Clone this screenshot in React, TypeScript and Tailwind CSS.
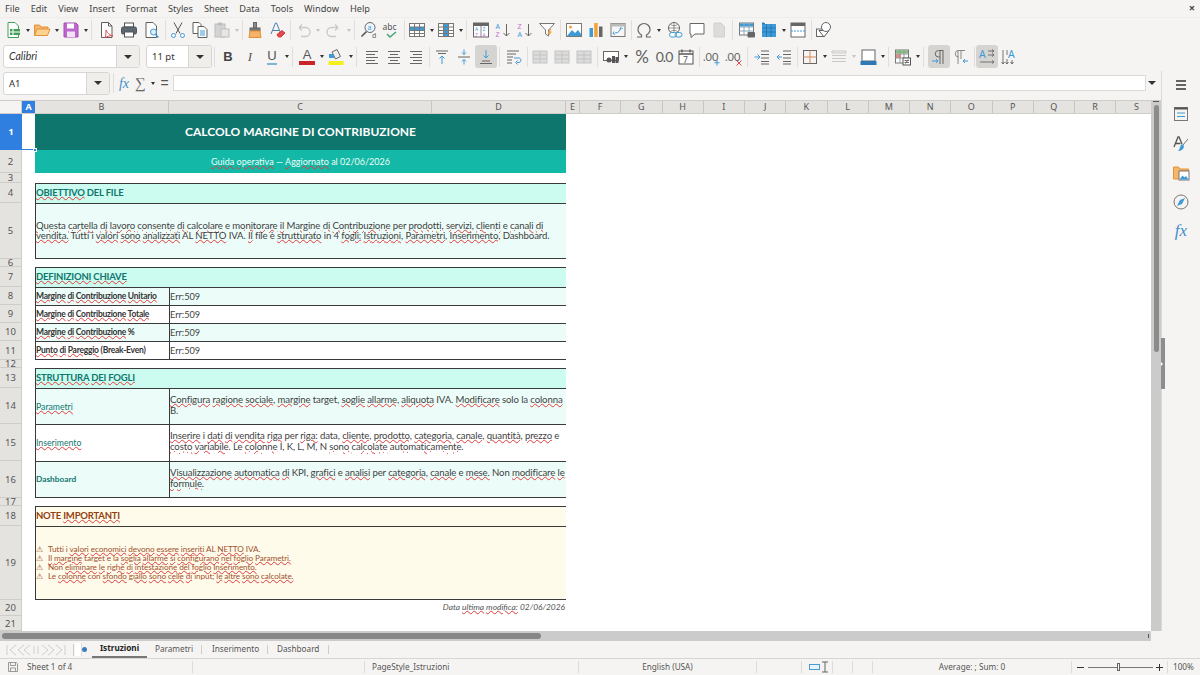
import { ReactNode } from "react";

const UI = "font-['Noto_Sans',sans-serif]";
const SHEET = "font-['Lato',sans-serif]";
const GRAY = "#5f5f5f";
const BLUE = "#3f9bd8";

// spell-check squiggle: words between ~ get the wavy red line
const T = ({ s }: { s: string }) => (
  <span>
    {s.split(/(~[^~]+~)/).map((part, i) =>
      part.startsWith("~") ? (
        <span key={i} className="underline decoration-wavy decoration-[#e23b3b] decoration-[0.5px] underline-offset-[0px]">
          {part.slice(1, -1)}
        </span>
      ) : (
        <span key={i}>{part}</span>
      )
    )}
  </span>
);

const Ico = ({ children }: { children: ReactNode }) => (
  <svg viewBox="0 0 18 18" className="w-[18px] h-[18px]" fill="none" stroke={GRAY} strokeWidth="1">
    {children}
  </svg>
);

const Btn = ({ children, active }: { children: ReactNode; active?: boolean }) => (
  <div className={active ? "w-[22px] h-[23px] shrink-0 flex items-center justify-center rounded-[3px] bg-[#d6d4d0]" : "w-[22px] h-[23px] shrink-0 flex items-center justify-center"}>
    {children}
  </div>
);

const Drop = ({ off }: { off?: boolean }) => (
  <div className="w-[7px] shrink-0 flex justify-center">
    <div className={off ? "border-x-[2.5px] border-t-[3px] border-x-transparent border-t-[#c4c4c4]" : "border-x-[2.5px] border-t-[3px] border-x-transparent border-t-[#333]"} />
  </div>
);

const Sep = () => (
  <div className="w-[4px] shrink-0 flex justify-center">
    <div className="w-px h-[20px] bg-[#e0dedb]" />
  </div>
);

const Combo = ({ w, text, italic }: { w: string; text: string; italic?: boolean }) => (
  <div className={`${w} h-[23px] shrink-0 flex rounded-[3px] border border-[#d8d6d3] bg-white overflow-hidden`}>
    <div className={italic ? "flex-1 pl-[5px] text-[10.5px] leading-[21px] italic text-[#333] font-['Lato',sans-serif]" : "flex-1 pl-[5px] text-[9.5px] leading-[21px] text-[#333]"}>{text}</div>
    <div className="w-[23px] bg-[#f0eeeb] border-l border-[#d8d6d3] flex items-center justify-center">
      <div className="border-x-[4px] border-t-[4px] border-x-transparent border-t-[#333]" />
    </div>
  </div>
);

const Grid = ({ row, col }: { row?: boolean; col?: boolean }) => (
  <Ico>
    <rect x="1.5" y="2.5" width="15" height="13" fill="#fff" stroke="#777" />
    {row && <rect x="2" y="6" width="14" height="3.5" fill={BLUE} stroke="none" />}
    {col && <rect x="6.5" y="3" width="5" height="12" fill={BLUE} stroke="none" />}
    <path d="M1.5 6h15M1.5 9.5h15M1.5 12.5h15M6.5 2.5v13M11.5 2.5v13" stroke="#777" />
  </Ico>
);

const Lines = ({ d }: { d: string }) => (
  <Ico>
    <path d={d} stroke="#666" />
  </Ico>
);

const Merge = () => (
  <Ico>
    <rect x="2" y="3" width="14" height="12" fill="#dcdcdc" stroke="#c4c4c4" />
    <path d="M2 7h14M2 11h14M9 3v12" stroke="#c4c4c4" />
  </Ico>
);

const Menu = () => (
  <div className="h-[17px] shrink-0 flex items-center pl-[5px] gap-[11px] text-[9.2px] text-[#444] relative">
    {["File", "Edit", "View", "Insert", "Format", "Styles", "Sheet", "Data", "Tools", "Window", "Help"].map((m) => (
      <span key={m}>{m}</span>
    ))}
    <span className="absolute right-[5px] top-0 text-[11px] font-bold text-[#444]">×</span>
  </div>
);

const ToolbarOne = () => (
  <div className="h-[26px] shrink-0 flex items-center pl-[2px] pb-[2px]">
    <Btn><Ico><path d="M4 1.5h7l3.5 3.5v11.5H4z" fill="#fff" stroke="#43a05a" /><rect x="6" y="8" width="10" height="6" fill="#43a05a" stroke="none" /><path d="M9 8v6M6 11h10" stroke="#fff" /></Ico></Btn>
    <Drop />
    <Btn><Ico><path d="M1.5 14.5V4h5l1.5 2h7v2.5" fill="#f6b567" stroke="#e0923a" /><path d="M1.5 14.5l2.5-6.5h13l-2.5 6.5z" fill="#fcd28f" stroke="#e0923a" /></Ico></Btn>
    <Drop />
    <Btn><Ico><path d="M2 2h12l2 2v12H2z" fill="#bd68cc" stroke="#a54fb6" /><rect x="5" y="2.5" width="7" height="5" fill="#fff" stroke="none" /><rect x="5" y="10.5" width="8" height="5.5" fill="#f2e2f5" stroke="none" /></Ico></Btn>
    <Drop />
    <Sep />
    <div className="w-[3px]" />
    <Btn><Ico><path d="M3.5 1.5h7l3.5 3.5v11.5H3.5z" fill="#fff" /><path d="M10.5 1.5v3.5h3.5" /><path d="M8 9c2 4 4 5 7 6-3-.5-6 0-8 2 1-3 1-5 1-8z" stroke="#e04f4f" /></Ico></Btn>
    <Btn><Ico><rect x="4.5" y="2" width="9" height="4" fill="#fff" stroke="#555" /><rect x="1.5" y="6" width="15" height="7" rx="1.5" fill="#5d6770" stroke="#4d565e" /><rect x="4.5" y="11" width="9" height="5" fill="#fff" stroke="#555" /></Ico></Btn>
    <div className="w-px" />
    <Btn><Ico><path d="M3 1.5h7l3.5 3.5v11.5H3z" fill="#fff" /><circle cx="10.5" cy="11" r="3" fill="#dff0fb" stroke={BLUE} /><path d="M12.5 13.5l3 3" stroke={BLUE} strokeWidth="1.5" /></Ico></Btn>
    <Sep />
    <Btn><Ico><path d="M5 1.5l6 11M13 1.5l-6 11" stroke="#555" /><circle cx="4.5" cy="14.5" r="2" stroke={BLUE} fill="#fff" /><circle cx="13.5" cy="14.5" r="2" stroke={BLUE} fill="#fff" /></Ico></Btn>
    <Btn><Ico><path d="M2 1.5h6l2 2v9H2z" fill="#fff" /><path d="M7 5.5h6l3 3v8H7z" fill="#fff" /><path d="M9 10h5M9 12h5M9 14h5" stroke={BLUE} /></Ico></Btn>
    <Btn><Ico><rect x="2" y="3" width="10" height="13" fill="#d4d4d4" stroke="#bdbdbd" /><rect x="8" y="8" width="8" height="8" fill="#e6e6e6" stroke="#bdbdbd" /><rect x="5" y="1.5" width="4" height="3" fill="#bdbdbd" stroke="none" /></Ico></Btn>
    <Drop off />
    <Sep />
    <Btn><Ico><rect x="7.5" y="1.5" width="3" height="5.5" fill="#8a8a8a" stroke="#666" /><rect x="4" y="7" width="10" height="3" fill="#777" stroke="#666" /><path d="M4 10h10l1 6.5H3z" fill="#f7b267" stroke="#e0923a" /></Ico></Btn>
    <Btn><Ico><path d="M3 13L7.5 2h1L13 13M5 9.5h6" stroke="#4a7fb0" /><path d="M9 13.5l5-4 3 2.500-4 4h-2.5z" fill="#e5484d" stroke="#d13a3f" /></Ico></Btn>
    <Sep />
    <Btn><Ico><path d="M5 6.5h6.5a4.5 4.5 0 0 1 0 9H7M5 6.5l3-3M5 6.5l3 3" stroke="#c9c9c9" strokeWidth="1.3" /></Ico></Btn>
    <Drop off />
    <div className="w-[2px]" />
    <Btn><Ico><path d="M13 6.5H6.5a4.5 4.5 0 0 0 0 9H11M13 6.5l-3-3M13 6.5l-3 3" stroke="#c9c9c9" strokeWidth="1.3" /></Ico></Btn>
    <Drop off />
    <Sep />
    <div className="w-[2px]" />
    <Btn><Ico><circle cx="10" cy="6.5" r="5" fill="#eef6fc" stroke="#666" /><path d="M6.5 10.5L1.5 15.5" stroke="#555" strokeWidth="1.6" /><text x="7.5" y="9" fontSize="7" fill={BLUE} stroke="none" fontFamily="Noto Sans">a</text><text x="12" y="17" fontSize="7" fill="#666" stroke="none" fontFamily="Noto Sans">d</text></Ico></Btn>
    <Btn><Ico><text x="0.5" y="9" fontSize="8.5" fill="#555" stroke="none" fontFamily="Noto Sans">abc</text><path d="M5 13l3 3 6-5" stroke="#3fa372" strokeWidth="1.4" /></Ico></Btn>
    <Sep />
    <Btn><Grid row /></Btn>
    <Drop />
    <Btn><Grid col /></Btn>
    <Drop />
    <Sep />
    <div className="w-[2px]" />
    <Btn><Ico><rect x="1.5" y="2" width="15" height="14" fill="#fff" stroke="#666" /><rect x="1.5" y="2" width="15" height="3" fill="#666" stroke="none" /><path d="M9 5v11" stroke="#888" /><text x="3" y="10" fontSize="5" fill={BLUE} stroke="none" fontFamily="Noto Sans">A</text><text x="10.500" y="10" fontSize="5" fill={BLUE} stroke="none" fontFamily="Noto Sans">Z</text><text x="3" y="15.5" fontSize="5" fill="#c86dd7" stroke="none" fontFamily="Noto Sans">Z</text><text x="10.500" y="15.5" fontSize="5" fill="#c86dd7" stroke="none" fontFamily="Noto Sans">A</text></Ico></Btn>
    <Btn><Ico><text x="1.5" y="8" fontSize="7" fill={BLUE} stroke="none" fontFamily="Noto Sans">A</text><text x="1.5" y="16" fontSize="7" fill="#c86dd7" stroke="none" fontFamily="Noto Sans">Z</text><path d="M12.5 3v12M9.5 12l3 3 3-3" stroke="#666" /></Ico></Btn>
    <Btn><Ico><text x="1.5" y="8" fontSize="7" fill="#c86dd7" stroke="none" fontFamily="Noto Sans">Z</text><text x="1.5" y="16" fontSize="7" fill={BLUE} stroke="none" fontFamily="Noto Sans">A</text><path d="M12.5 3v12M9.5 12l3 3 3-3" stroke="#666" /></Ico></Btn>
    <Btn><Ico><path d="M1.5 2.5h15l-6 6.5v6l-3-2v-4z" fill="#fff" stroke="#777" /><path d="M12 8l-2.5 4.5h2L10 16l4-5.5h-2l1.5-2.5z" fill="#f2a33a" stroke="none" /></Ico></Btn>
    <Sep />
    <div className="w-px" />
    <Btn><Ico><rect x="1.5" y="2.5" width="15" height="13" fill="#fff" stroke="#777" /><circle cx="5.5" cy="6" r="1.5" fill="#f2a33a" stroke="none" /><path d="M2 15l5-6 3 3 3-3 3 4v2z" fill={BLUE} stroke="none" /></Ico></Btn>
    <Btn><Ico><rect x="2.5" y="7" width="3.5" height="9" fill={BLUE} stroke="none" /><rect x="7.2" y="2" width="3.5" height="14" fill="#f2a33a" stroke="none" /><rect x="12" y="5.5" width="3.5" height="10.5" fill="#666" stroke="none" /></Ico></Btn>
    <Btn><Ico><rect x="2" y="2.5" width="14" height="13" fill="#f6f6f6" stroke="#777" /><rect x="2" y="2.5" width="14" height="3" fill="#bbb" stroke="none" /><path d="M6 12c3 0 5-2 6-5M10.5 8l1.700-1.500L13.5 8M5 10.500l-1 2 2 1" stroke={BLUE} /></Ico></Btn>
    <Sep />
    <Btn><Ico><path d="M2 16h4.500v-2C4 12.500 3 10.500 3 8.500a6 6 0 0 1 12 0c0 2-1 4-3.500 5.500v2H16" stroke="#666" strokeWidth="1.2" /></Ico></Btn>
    <Drop />
    <div className="w-[2px]" />
    <Btn><Ico><circle cx="8" cy="7" r="5.5" fill="#fff" stroke="#666" /><path d="M2.500 7h11M8 1.500v11M4.500 3.500c2 1.500 5 1.500 7 0M4.500 10.500c2-1.500 5-1.500 7 0" stroke="#666" strokeWidth=".7" /><rect x="3.5" y="11.5" width="7" height="4.5" rx="2.2" fill="#fff" stroke={BLUE} /><rect x="9" y="11.5" width="7" height="4.5" rx="2.2" stroke={BLUE} /></Ico></Btn>
    <Btn><Ico><path d="M2 2.500h14v10.500H7l-4 3.500V13H2z" fill="#fff" stroke="#666" /></Ico></Btn>
    <Btn><Ico><path d="M4 2h7l3.500 3.500V16H4z" fill="#dcdcdc" stroke="#cfcfcf" /></Ico></Btn>
    <Sep />
    <div className="w-[2px]" />
    <Btn><Ico><rect x="1.5" y="2" width="14" height="12" fill="#fff" stroke="#777" /><rect x="2" y="2.5" width="13" height="3" fill={BLUE} stroke="none" /><path d="M1.500 6h14M1.500 10h14M6 2v12M11 2v12" stroke="#8ab" /><rect x="9.5" y="11" width="7.5" height="5.5" rx="1" fill="#666" stroke="none" /></Ico></Btn>
    <Btn><Ico><rect x="2" y="3" width="14" height="13" fill={BLUE} stroke="none" /><path d="M2 7h14M2 11h14M6.500 3v13M11 3v13" stroke="#1d6fa8" strokeWidth=".7" /><path d="M3 1v3M2 2.500h3" stroke="#2b7fb8" /></Ico></Btn>
    <Drop />
    <Btn><Ico><rect x="2" y="2" width="14" height="14" fill="#fff" stroke="#666" /><rect x="2" y="2" width="14" height="3" fill="#666" stroke="none" /><path d="M2 10h14" stroke={BLUE} strokeDasharray="2 1" /></Ico></Btn>
    <Sep />
    <Btn><Ico><rect x="1.5" y="8" width="7" height="7.5" fill="#fff" stroke="#666" /><path d="M4 9.500l5 6.500 5-6.500z" fill="#fff" /><circle cx="11" cy="6" r="4.5" fill="#fff" stroke="#666" /></Ico></Btn>
  </div>
);

const ToolbarTwo = () => (
  <div className="h-[25px] shrink-0 flex items-center pl-[3px]">
    <Combo w="w-[137px]" text="Calibri" italic />
    <div className="w-[6px]" />
    <Combo w="w-[66px]" text="11 pt" />
    <Sep />
    <div className="w-px" />
    <Btn><span className="text-[13px] font-bold text-[#444] font-['Liberation_Sans',sans-serif]">B</span></Btn>
    <Btn><span className="text-[13px] italic text-[#555] font-['Liberation_Serif',serif]">I</span></Btn>
    <Btn><span className="text-[13px] text-[#555] border-b-2 border-[#7fb2d9] leading-[14px] font-['Liberation_Sans',sans-serif]">U</span></Btn>
    <Drop />
    <Sep />
    <div className="w-[2px]" />
    <Btn><div className="flex flex-col items-center"><span className="text-[13px] leading-[13px] text-[#555] font-['Liberation_Sans',sans-serif]">A</span><div className="w-[16px] h-[4px] bg-[#c9252b]" /></div></Btn>
    <Drop />
    <Btn><Ico><path d="M5 4l5-2.500 3.500 7-5 2.500z" fill="#eee" stroke="#666" /><rect x="2" y="6" width="5" height="4" fill={BLUE} stroke="none" /><rect x="1.5" y="13" width="15" height="4" fill="#f7ee1d" stroke="none" /></Ico></Btn>
    <Drop />
    <Sep />
    <div className="w-[3px]" />
    <Btn><Lines d="M3 3.500h12M3 6.500h9M3 9.500h12M3 12.500h9M3 15.500h12" /></Btn>
    <Btn><Lines d="M3 3.500h12M5 6.500h8M3 9.500h12M5 12.500h8M3 15.500h12" /></Btn>
    <Btn><Lines d="M3 3.500h12M6 6.500h9M3 9.500h12M6 12.500h9M3 15.500h12" /></Btn>
    <Sep />
    <Btn><Ico><path d="M3 3h12M5 5.500h8" stroke="#666" /><path d="M9 16V8M6.500 10.500L9 8l2.500 2.500" stroke={BLUE} /></Ico></Btn>
    <Btn><Ico><path d="M3 9h12" stroke="#666" /><path d="M9 1.500v5M7 4.500l2 2 2-2M9 16.500v-5M7 13.500l2-2 2 2" stroke={BLUE} /></Ico></Btn>
    <Btn active><Ico><path d="M3 15.500h12M5 13h8" stroke="#666" /><path d="M9 2v8M6.500 7.500L9 10l2.500-2.500" stroke={BLUE} /></Ico></Btn>
    <Sep />
    <div className="w-[2px]" />
    <Btn><Ico><path d="M2 3h12M2 6h9M2 9h6M2 12h5M2 15h5" stroke="#666" /><path d="M9 10h5c2.500 0 2.500 4.500 0 4.500h-2M12.500 12.500l-1.800 2 1.800 2" stroke={BLUE} /></Ico></Btn>
    <Sep />
    <Btn><Merge /></Btn>
    <Btn><Merge /></Btn>
    <Btn><Merge /></Btn>
    <Sep />
    <div className="w-px" />
    <Btn><Ico><rect x="1.5" y="3.5" width="15" height="9" fill="#fff" stroke="#666" /><circle cx="7" cy="12" r="2.5" fill="#555" stroke="none" /><rect x="10" y="8" width="3" height="7" fill="#555" stroke="none" /><rect x="13.5" y="9" width="3" height="6" fill="#555" stroke="none" /></Ico></Btn>
    <Drop />
    <div className="w-[2px]" />
    <Btn><span className="text-[17px] text-[#5f5f5f] font-['Lato',sans-serif]">%</span></Btn>
    <Btn><span className="text-[14px] text-[#5f5f5f] tracking-[-1px] font-['Lato',sans-serif]">0.0</span></Btn>
    <Btn><Ico><rect x="2" y="3" width="14" height="13" fill="#fff" stroke="#555" /><path d="M2 6h14M5 1.500v3M13 1.500v3" stroke="#555" strokeWidth="1.3" /><text x="6" y="14.5" fontSize="8.5" fill="#555" stroke="none" fontFamily="Noto Sans">7</text></Ico></Btn>
    <Sep />
    <Btn><Ico><text x="0" y="13" fontSize="11" fill="#666" stroke="none" fontFamily="Lato">.00</text><path d="M14 12v5.500M11.500 14.700h5" stroke={BLUE} /></Ico></Btn>
    <Btn><Ico><text x="0" y="13" fontSize="11" fill="#666" stroke="none" fontFamily="Lato">.00</text><path d="M11.500 12.500l5 5M16.500 12.500l-5 5" stroke="#e5484d" /></Ico></Btn>
    <Sep />
    <div className="w-[2px]" />
    <Btn><Ico><path d="M8 3h8M8 6.500h8M8 10h8M8 13.500h8M8 16h8" stroke="#666" /><path d="M1.500 9h5M4.500 6.500L7 9l-2.500 2.500" stroke={BLUE} /></Ico></Btn>
    <Btn><Ico><path d="M8 3h8M8 6.500h8M8 10h8M8 13.500h8M8 16h8" stroke="#666" /><path d="M7 9H2M4.500 6.500L2 9l2.500 2.500" stroke={BLUE} /></Ico></Btn>
    <Sep />
    <Btn><Ico><rect x="2.5" y="2.5" width="13" height="13" stroke="#666" /><path d="M9 2.500v13M2.500 9h13" stroke="#d38a5a" /></Ico></Btn>
    <Drop />
    <Btn><Ico><path d="M2 3h14v2H2zM2 7.500h14M2 10.500h14M2 13.500h14" stroke="#c8c8c8" /></Ico></Btn>
    <Drop off />
    <Btn><Ico><rect x="3" y="2" width="13" height="11" fill="#fff" stroke="#666" /><rect x="1.5" y="13" width="16" height="4" fill="#2f77b5" stroke="none" /></Ico></Btn>
    <Drop />
    <Sep />
    <div className="w-[2px]" />
    <Btn><Ico><rect x="1.5" y="2" width="13" height="13" fill="#fff" stroke="#777" /><rect x="2" y="2.5" width="12" height="3" fill="#7fbf7f" stroke="none" /><rect x="2" y="6" width="5" height="4" fill="#e58a8a" stroke="none" /><path d="M1.500 6h13M1.500 10h13M6 2v13M10 2v13" stroke="#999" /><rect x="9" y="10" width="7.5" height="7" fill="#fff" stroke="#555" /><path d="M10.500 12.500h4.500M10.500 14.500h4.500M14 11.500l-2.500 4" stroke="#555" strokeWidth=".8" /></Ico></Btn>
    <Drop />
    <Sep />
    <div className="w-[3px]" />
    <Btn active><Ico><path d="M13 2v14M10 2v14M13 2.500H8.500a3.200 3.200 0 0 0 0 6.500H10" stroke="#666" /><path d="M2 13h6M6 11l2 2-2 2" stroke={BLUE} /></Ico></Btn>
    <Btn><Ico><path d="M6 2v14M9 2v9M13 2.500H6.500a3.200 3.200 0 0 0 0 6.500" stroke="#888" /><path d="M16 13h-5M13 11l-2 2 2 2" stroke={BLUE} /></Ico></Btn>
    <Sep />
    <Btn active><Ico><text x="1" y="10" fontSize="10.5" fill={BLUE} stroke="none" fontFamily="Noto Sans">A</text><path d="M10 3h6M14 1.500L16 3l-2 1.500M10 7h6M14 5.500L16 7l-2 1.500M2 14h14M14 12.500l2 1.500-2 1.500" stroke="#666" strokeWidth=".9" /></Ico></Btn>
    <Btn><Ico><text x="8" y="10" fontSize="10.5" fill={BLUE} stroke="none" fontFamily="Noto Sans">A</text><path d="M3 2v14M1.500 14L3 16l1.500-2M7 2v5M5.500 14L7 16l1.500-2M7 11v5M12 12v4M10.500 14l1.500 2 1.500-2" stroke="#666" strokeWidth=".9" /></Ico></Btn>
  </div>
);

const FormulaBar = () => (
  <div className="h-[31px] shrink-0 flex items-center pl-[3px] pb-[3px]">
    <Combo w="w-[107px]" text="A1" />
    <div className="w-[7px] shrink-0 flex justify-center"><div className="w-px h-[20px] bg-[#e0dedb]" /></div>
    <div className="w-[14px] text-center italic text-[14px] text-[#3f8fc9] font-['Liberation_Serif',serif]">fx</div>
    <div className="w-[2px]" />
    <div className="w-[14px] text-center text-[15px] text-[#666] font-['Liberation_Serif',serif]">∑</div>
    <div className="w-[2px]" />
    <Drop />
    <div className="w-[17px] text-center text-[14px] text-[#555] font-['Liberation_Sans',sans-serif]">=</div>
    <div className="w-[973px] shrink-0 h-[16px] bg-white border border-[#dcdad7]" />
    <div className="w-[12px] flex justify-center">
      <div className="border-x-[4px] border-t-[4px] border-x-transparent border-t-[#333]" />
    </div>
  </div>
);

const ColumnHeaders = () => (
  <div className="h-[14px] shrink-0 flex bg-[#e5e3e0] border-y border-[#cfcdca] text-[9px] leading-[12px] text-[#555] overflow-hidden">
    <div className="w-[22px] shrink-0 bg-[#f5f4f2] border-r border-[#cfcdca]" />
    <div className="w-[13px] shrink-0 bg-[#2f7fe0] text-white text-center font-bold">A</div>
    <div className="w-[134px] shrink-0 text-center border-r border-[#c9c7c4]">B</div>
    <div className="w-[263px] shrink-0 text-center border-r border-[#c9c7c4]">C</div>
    <div className="w-[134px] shrink-0 text-center border-r border-[#c9c7c4]">D</div>
    <div className="w-[14px] shrink-0 text-center border-r border-[#c9c7c4]">E</div>
    {"FGHIJKLMNOPQRS".split("").map((c) => (
      <div key={c} className="w-[41.25px] shrink-0 text-center border-r border-[#c9c7c4]">{c}</div>
    ))}
  </div>
);

const Row = ({ n, h, active, children }: { n: number; h: string; active?: boolean; children?: ReactNode }) => (
  <div className={`flex shrink-0 ${h} bg-white`}>
    <div
      className={
        active
          ? `w-[22px] shrink-0 flex items-center justify-center text-[9.5px] font-bold text-white bg-[#2f7fe0] ${UI}`
          : `w-[22px] shrink-0 pt-[2px] flex items-center justify-center text-[9.5px] text-[#555] bg-[#e5e3e0] border-r border-b border-[#cfcdca] ${UI}`
      }
    >
      {n}
    </div>
    <div className="w-[13px] shrink-0 relative">
      {active && (
        <>
          <div className="absolute left-0 right-0 bottom-0 h-px bg-[#2f7fe0]" />
          <div className="absolute right-[-2px] bottom-[-2px] w-[4px] h-[4px] bg-[#2f7fe0] border border-white z-10" />
        </>
      )}
    </div>
    <div className="w-[531px] shrink-0 flex overflow-hidden">{children}</div>
  </div>
);

const Section = ({ n, text }: { n: number; text: string }) => (
  <Row n={n} h="h-[20px]">
    <div className="w-full border-l border-t border-[#3a3a3a] bg-[#ccfbef] text-[9.5px] tracking-[-0.2px] font-bold leading-[18px] text-[#0f766e]">
      <T s={text} />
    </div>
  </Row>
);

const KeyRow = ({ n, label, tint, last }: { n: number; label: string; tint?: boolean; last?: boolean }) => (
  <Row n={n} h={last ? "h-[19px]" : "h-[18px]"}>
    <div className={`flex w-full border-l border-t border-[#3a3a3a] ${last ? "border-b" : ""} ${tint ? "bg-[#ecfdf9]" : "bg-white"} leading-[17px]`}>
      <div className="w-[134px] shrink-0 text-[8.5px] tracking-[-0.25px] font-bold text-[#333] border-r border-[#3a3a3a] whitespace-nowrap"><T s={label} /></div>
      <div className="text-[#444] text-[9.2px]">Err:509</div>
    </div>
  </Row>
);

const SheetRow = ({ n, h, name, bold, tint, last, l1, l2 }: { n: number; h: string; name: string; bold?: boolean; tint?: boolean; last?: boolean; l1: string; l2: string }) => (
  <Row n={n} h={h}>
    <div className={`flex w-full border-l border-t border-[#3a3a3a] ${last ? "border-b" : ""} ${tint ? "bg-[#ecfdf9]" : "bg-white"}`}>
      <div className={`w-[134px] shrink-0 flex items-center border-r border-[#3a3a3a] text-[#0f766e] ${bold ? "font-bold text-[8.3px]" : "text-[8.7px]"}`}>
        <T s={name} />
      </div>
      <div className="pt-[6px] text-[9.6px] tracking-[-0.12px] leading-[10.5px] text-[#3f3f3f] whitespace-nowrap">
        <div><T s={l1} /></div>
        <div><T s={l2} /></div>
      </div>
    </div>
  </Row>
);

const Note = ({ s }: { s: string }) => (
  <div className="flex">
    <span className="w-[12px] shrink-0">⚠</span>
    <T s={s} />
  </div>
);

const Sheet = () => (
  <div className={`relative flex-1 flex flex-col overflow-hidden ${SHEET}`}>
    <div className={UI}><ColumnHeaders /></div>
    <Row n={1} h="h-[36px]" active>
      <div className="w-full bg-[#0f766e] flex items-center justify-center text-[12px] font-bold text-white">
        <T s="CALCOLO MARGINE DI CONTRIBUZIONE" />
      </div>
    </Row>
    <Row n={2} h="h-[23px]">
      <div className="w-full bg-[#14b8a6] flex items-center justify-center text-[9px] text-[#ecfdf9]">
        <T s="~Guida~ ~operativa~ — ~Aggiornato~ al 02/06/2026" />
      </div>
    </Row>
    <Row n={3} h="h-[10px]" />
    <Section n={4} text="~OBIETTIVO~ DEL FILE" />
    <Row n={5} h="h-[56px]">
      <div className="w-full border-l border-y border-[#3a3a3a] bg-[#ecfdf9] flex flex-col justify-center text-[9.6px] tracking-[-0.12px] leading-[10.5px] text-[#3f3f3f] whitespace-nowrap">
        <div><T s="~Questa~ ~cartella~ ~di~ ~lavoro~ ~consente~ ~di~ ~calcolare~ e ~monitorare~ ~il~ ~Margine~ ~di~ ~Contribuzione~ per ~prodotti,~ ~servizi,~ ~clienti~ e ~canali~ ~di~" /></div>
        <div><T s="~vendita.~ Tutti i ~valori~ ~sono~ ~analizzati~ AL ~NETTO~ IVA. ~Il~ file è ~strutturato~ in 4 ~fogli:~ ~Istruzioni,~ ~Parametri,~ ~Inserimento,~ Dashboard." /></div>
      </div>
    </Row>
    <Row n={6} h="h-[8px]" />
    <Section n={7} text="~DEFINIZIONI~ ~CHIAVE~" />
    <KeyRow n={8} tint label="~Margine~ ~di~ ~Contribuzione~ ~Unitario~" />
    <KeyRow n={9} label="~Margine~ ~di~ ~Contribuzione~ ~Totale~" />
    <KeyRow n={10} tint label="~Margine~ ~di~ ~Contribuzione~ %" />
    <KeyRow n={11} last label="~Punto~ ~di~ ~Pareggio~ (Break-Even)" />
    <Row n={12} h="h-[8px]" />
    <Section n={13} text="~STRUTTURA~ ~DEI~ ~FOGLI~" />
    <SheetRow n={14} h="h-[36px]" tint name="~Parametri~" l1="~Configura~ ~ragione~ ~sociale,~ ~margine~ target, ~soglie~ ~allarme,~ ~aliquota~ IVA. ~Modificare~ solo la ~colonna~" l2="B." />
    <SheetRow n={15} h="h-[37px]" name="~Inserimento~" l1="~Inserire~ i ~dati~ ~di~ ~vendita~ ~riga~ per ~riga:~ data, ~cliente,~ ~prodotto,~ ~categoria,~ ~canale,~ ~quantità,~ ~prezzo~ e" l2="~costo~ ~variabile.~ Le ~colonne~ I, K, L, M, N ~sono~ ~calcolate~ ~automaticamente.~" />
    <SheetRow n={16} h="h-[37px]" tint last bold name="Dashboard" l1="~Visualizzazione~ ~automatica~ ~di~ KPI, ~grafici~ e ~analisi~ per ~categoria,~ ~canale~ e ~mese.~ Non ~modificare~ ~le~" l2="~formule.~" />
    <Row n={17} h="h-[8px]" />
    <Row n={18} h="h-[20px]">
      <div className="w-full border-l border-t border-[#3a3a3a] bg-[#fffbeb] text-[9.5px] tracking-[-0.2px] font-bold leading-[18px] text-[#92400e]">
        <T s="NOTE ~IMPORTANTI~" />
      </div>
    </Row>
    <Row n={19} h="h-[74px]">
      <div className="w-full border-l border-y border-[#3a3a3a] bg-[#fffbeb] flex flex-col justify-center text-[8.2px] tracking-[-0.1px] leading-[9px] text-[#a0522d] whitespace-nowrap">
        <Note s="Tutti i ~valori~ ~economici~ ~devono~ ~essere~ ~inseriti~ AL ~NETTO~ IVA." />
        <Note s="~Il~ ~margine~ target e la ~soglia~ ~allarme~ ~si~ ~configurano~ ~nel~ ~foglio~ ~Parametri.~" />
        <Note s="Non ~eliminare~ ~le~ ~righe~ ~di~ ~intestazione~ ~del~ ~foglio~ ~Inserimento.~" />
        <Note s="Le ~colonne~ con ~sfondo~ ~giallo~ ~sono~ ~celle~ ~di~ input; ~le~ ~altre~ ~sono~ ~calcolate.~" />
      </div>
    </Row>
    <Row n={20} h="h-[16px]">
      <div className="w-full text-right pr-[1px] text-[8.4px] italic leading-[14px] text-[#555]">
        <T s="Data ~ultima~ ~modifica:~ 02/06/2026" />
      </div>
    </Row>
    <Row n={21} h="h-[15px]" />
  </div>
);

const VScroll = () => (
  <div className="w-[10px] shrink-0 bg-[#cbcbcb] flex flex-col items-center">
    <div className="w-[6px] h-[1px] mt-[1px] bg-[#555]" />
    <div className="w-[5px] h-[247px] mt-[3px] rounded-[3px] bg-[#8b8b8b]" />
  </div>
);

const Sidebar = () => (
  <div className="w-[39px] shrink-0 -mt-[29px] relative border-l border-[#dcdad7] bg-[#f5f4f2] flex flex-col items-center gap-[11.3px] pt-[5px]">
    <div className="absolute left-[-1px] top-[267px] w-[4px] h-[51px] bg-[#8e8e8e] flex items-center">
      <div className="border-y-[2px] border-l-[2px] border-y-transparent border-l-white" />
    </div>
    <svg viewBox="0 0 18 18" className="w-[18px] h-[18px]" stroke="#333" strokeWidth="1.4"><path d="M4 5h10M4 9h10M4 13h10" /></svg>
    <svg viewBox="0 0 18 18" className="w-[18px] h-[18px]" fill="none"><rect x="2.5" y="2.5" width="13" height="13" stroke="#777" /><rect x="2.5" y="2.5" width="13" height="2" fill="#555" /><path d="M5 8h8M5 11.500h8" stroke={BLUE} /></svg>
    <svg viewBox="0 0 18 18" className="w-[18px] h-[18px]" fill="none"><path d="M2 12L6 2h1l3 7M3.500 8.500h5" stroke="#555" strokeWidth="1.3" /><path d="M16 4l-5 6" stroke="#777" /><path d="M10 9l2 2c0 3-3 5-6 5 2-1 1.500-5 4-7z" fill={BLUE} /></svg>
    <svg viewBox="0 0 18 18" className="w-[18px] h-[18px]"><path d="M1.500 15V3h5l1.500 2h8.500v2H8v8z" fill="#f6b567" stroke="#e0923a" /><rect x="7" y="7" width="10" height="9" fill="#fff" stroke="#777" /><path d="M7.500 15.500l3-4 2 2 1.500-1.500 2.500 3.500z" fill={BLUE} /></svg>
    <svg viewBox="0 0 18 18" className="w-[18px] h-[18px]" fill="none"><circle cx="9" cy="9" r="7" stroke="#777" /><path d="M13 5L8 7 5 13l5-2z" fill={BLUE} /></svg>
    <span className="text-[17px] leading-[18px] italic text-[#3f8fc9] font-['Liberation_Serif',serif]">fx</span>
  </div>
);

const Tabs = () => (
  <div className="h-[17px] shrink-0 flex items-center text-[8.2px] text-[#555]">
    <div className="w-[66px] ml-[6px] h-[12px] flex items-center overflow-hidden">
      <svg viewBox="0 0 60 12" className="w-[60px] h-[12px]" fill="none" stroke="#cfcfcf"><path d="M1 1v10M10 1L4 6l6 5M18 1l-6 5 6 5M24 1l-6 5 6 5M28 2v8M32 2v8M36 1l6 5-6 5M42 1l6 5-6 5M50 1l6 5-6 5M59 1v10" /></svg>
    </div>
    <div className="w-px h-[12px] bg-[#cfcdca] ml-[1px] mr-[1px]" />
    <div className="w-[7px] h-[13px] bg-white border-r border-[#ddd]" />
    <div className="w-[5px] h-[5px] rounded-full bg-[#3f7fb8] mr-[5px]" />
    <div className="h-[17px] w-[55px] shrink-0 border-b-2 border-[#777] flex items-center justify-center font-bold text-[#222]">Istruzioni</div>
    <span className="ml-[8px] w-[38px] shrink-0">Parametri</span>
    <div className="w-px h-[9px] bg-[#cfcdca] ml-[8px] mr-[10px]" />
    <span className="w-[45px] shrink-0">Inserimento</span>
    <div className="w-px h-[9px] bg-[#cfcdca] ml-[10px] mr-[9px]" />
    <span className="w-[41px] shrink-0">Dashboard</span>
    <div className="w-px h-[9px] bg-[#cfcdca] ml-[10px]" />
  </div>
);

const Cell = ({ w, children, center }: { w: string; children?: ReactNode; center?: boolean }) => (
  <div className={`${w} shrink-0 h-[12px] flex items-center border-r border-[#dedcd9] ${center ? "justify-center" : ""}`}>{children}</div>
);

const StatusBar = () => (
  <div className="h-[17px] shrink-0 flex items-center border-t border-[#d8d6d3] text-[8.2px] text-[#555]">
    <Cell w="w-[193px]">
      <svg viewBox="0 0 12 12" className="w-[12px] h-[12px] ml-[7px] mr-[8px]" fill="none" stroke="#999"><path d="M1.500 1.500h8l1 1v8h-9z" /><path d="M3.500 1.500v3h5v-3M3.500 10.500V7h5v3.500" /></svg>
      Sheet 1 of 4
    </Cell>
    <Cell w="w-[172px]" />
    <div className="w-[7px] shrink-0" />
    <Cell w="w-[207px]">PageStyle_Istruzioni</Cell>
    <Cell w="w-[178px]" center>English (USA)</Cell>
    <Cell w="w-[45px]" />
    <Cell w="w-[31px]">
      <div className="w-[11px] h-[6px] ml-[7px] border border-[#4a9ad4] bg-[#e8f3fb]" />
      <svg viewBox="0 0 8 12" className="w-[8px] h-[12px] ml-[1px]" fill="none" stroke="#666"><path d="M1 1h6M1 11h6M4 1v10" /></svg>
    </Cell>
    <Cell w="w-[20px]" />
    <Cell w="w-[20px]" />
    <Cell w="w-[199px]" center>Average: ; Sum: 0</Cell>
    <div className="w-[96px] shrink-0 h-[12px] flex items-center border-r border-[#dedcd9] relative">
      <div className="w-[7px] h-px bg-[#333] ml-[5px]" />
      <div className="w-[65px] h-px bg-[#777] ml-[4px]" />
      <div className="absolute left-[45px] top-[2px] w-[3px] h-[8px] border border-[#666] bg-[#f5f4f2]" />
      <div className="relative w-[7px] h-px bg-[#333] ml-[3px]">
        <div className="absolute left-[3px] top-[-3px] w-px h-[7px] bg-[#333]" />
      </div>
    </div>
    <span className="ml-[5px]">100%</span>
  </div>
);

const App = () => {
  return (
    <div className={`w-[1200px] h-[675px] flex flex-col overflow-hidden bg-[#f5f4f2] ${UI}`}>
      <Menu />
      <div className="border-t border-[#eeedea]" />
      <ToolbarOne />
      <ToolbarTwo />
      <FormulaBar />
      <div className="flex h-[531px] shrink-0">
        <div className="w-[1151px] shrink-0 flex"><Sheet /></div>
        <VScroll />
        <Sidebar />
      </div>
      <div className="flex h-[10px] shrink-0">
        <div className="w-[1151px] bg-[#cbcbcb] relative">
          <div className="w-[539px] h-[6px] mt-[2px] ml-[2px] rounded-[3px] bg-[#868686]" />
          <div className="absolute left-[1148px] top-[3px] w-px h-[4px] bg-[#555]" />
        </div>
      </div>
      <Tabs />
      <StatusBar />
    </div>
  );
};

export default App;
